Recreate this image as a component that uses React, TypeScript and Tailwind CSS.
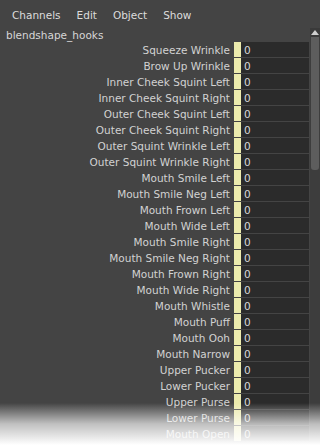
import React from 'react'

const rows = [
  'Squeeze Wrinkle',
  'Brow Up Wrinkle',
  'Inner Cheek Squint Left',
  'Inner Cheek Squint Right',
  'Outer Cheek Squint Left',
  'Outer Cheek Squint Right',
  'Outer Squint Wrinkle Left',
  'Outer Squint Wrinkle Right',
  'Mouth Smile Left',
  'Mouth Smile Neg Left',
  'Mouth Frown Left',
  'Mouth Wide Left',
  'Mouth Smile Right',
  'Mouth Smile Neg Right',
  'Mouth Frown Right',
  'Mouth Wide Right',
  'Mouth Whistle',
  'Mouth Puff',
  'Mouth Ooh',
  'Mouth Narrow',
  'Upper Pucker',
  'Lower Pucker',
  'Upper Purse',
  'Lower Purse',
  'Mouth Open',
]

export default function App() {
  return (
    <div
      className="relative w-[320px] h-[445px] overflow-hidden bg-[#444444] text-[#d2d2d2] text-[10.5px]"
      style={{ fontFamily: '"DejaVu Sans", Verdana, sans-serif' }}
    >
      {/* Menu bar */}
      <div className="flex items-center h-[28px] pt-[3px] pl-[12px] gap-[16px] text-[#dcdcdc]">
        <span>Channels</span>
        <span>Edit</span>
        <span>Object</span>
        <span>Show</span>
      </div>

      <div className="flex">
        <div className="flex-1 pr-[1px]">
          <div className="h-[14px] leading-[14px] pl-[6px] text-[#d6d6d6]">blendshape_hooks</div>
          {rows.map((name) => (
            <div key={name} className="flex h-[15px] mb-[1px] leading-[16px]">
              <div className="flex-1 text-right pr-[4px] whitespace-nowrap">{name}</div>
              <div className="w-[7px] bg-[#ecebad]" />
              <div className="w-[68px] bg-[#2b2b2b] pl-[3px] text-[#d8d8d8]">0</div>
            </div>
          ))}
        </div>

        {/* Scrollbar */}
        <div className="w-[10px] flex flex-col bg-[#3d3d3d] h-[420px]">
          <div className="h-[9px] bg-[#3a3a3a] flex items-center justify-center">
            <svg width="8" height="5" viewBox="0 0 8 5">
              <polygon points="4,0 8,5 0,5" fill="#cfcfcf" />
            </svg>
          </div>
          <div className="h-[133px] bg-[#5d5d5d] mx-[1px] rounded-b-[3px]" />
        </div>
      </div>

      {/* Bottom fade */}
      <div className="absolute left-0 right-0 bottom-0 h-[42px] bg-gradient-to-b from-[#ffffff00] via-[#ffffffaa] to-[#ffffff] pointer-events-none" />
    </div>
  )
}
